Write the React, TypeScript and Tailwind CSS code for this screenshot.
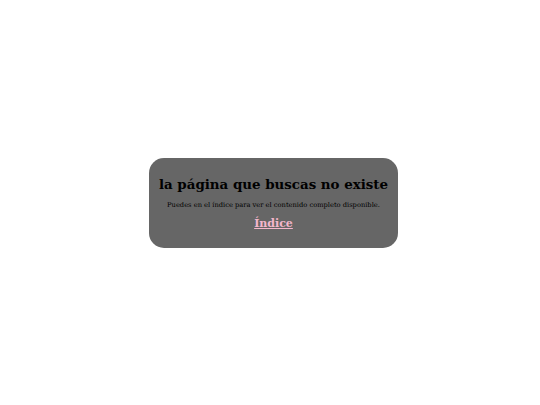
export default function App() {
  return (
    <div className="flex h-screen w-full items-center justify-center bg-white [font-family:'DejaVu_Serif',serif]">
      <div className="ml-[7px] flex w-[249px] flex-col items-center rounded-[15px] bg-[#666666] pt-[17px] pb-[17px] text-center">
        <h1 className="text-[13.4px] leading-[18px] font-bold whitespace-nowrap text-black">la página que buscas no existe</h1>
        <p className="mt-[7px] text-[6.7px] leading-[10px] whitespace-nowrap text-black">
          Puedes en el índice para ver el contenido completo disponible.
        </p>
        <a href="#" className="mt-[7px] text-[11px] leading-[14px] font-bold text-[#f4b6cc] underline">
          Índice
        </a>
      </div>
    </div>
  )
}
